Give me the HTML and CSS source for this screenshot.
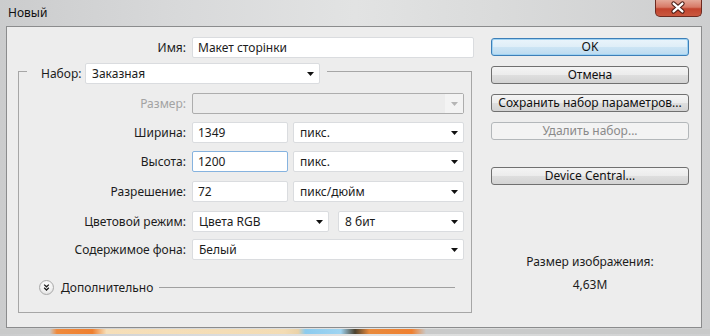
FILE: index.html
```html
<!DOCTYPE html>
<html lang="ru">
<head>
<meta charset="utf-8">
<title>Новый</title>
<link rel="stylesheet" href="styles.css">
</head>
<body>
<div class="win">
  <div class="titlebar">
    <span class="title">Новый</span>
    <div class="close">
      <svg width="47" height="17" viewBox="0 0 47 17">
        <path d="M19 3.5 L28 11.5 M28 3.5 L19 11.5" stroke="#4a1c14" stroke-width="4.6" stroke-linecap="round"/>
        <path d="M19 3.5 L28 11.5 M28 3.5 L19 11.5" stroke="#ffffff" stroke-width="2.4" stroke-linecap="round"/>
      </svg>
    </div>
  </div>
  <div class="client">
    <div class="left">
      <div class="row name-row">
        <span class="lbl">Имя:</span>
        <div class="field input w-name">Макет сторінки</div>
      </div>
      <div class="group">
        <div class="ghead">
          <div class="gcorner"></div>
          <span class="glabel">Набор:</span>
          <div class="field select w-preset">Заказная<span class="arr"><svg width="7" height="4" viewBox="0 0 7 4"><path d="M0 0H7L3.5 4Z"/></svg></span></div>
          <div class="gline"></div>
        </div>
        <div class="gbody">
          <div class="row r1">
            <span class="lbl dis">Размер:</span>
            <div class="field select disabled w-full"><span class="arr"><svg width="7" height="4" viewBox="0 0 7 4"><path d="M0 0H7L3.5 4Z"/></svg></span></div>
          </div>
          <div class="row r2">
            <span class="lbl">Ширина:</span>
            <div class="field input w-num">1349</div>
            <div class="field select w-unit">пикс.<span class="arr"><svg width="7" height="4" viewBox="0 0 7 4"><path d="M0 0H7L3.5 4Z"/></svg></span></div>
          </div>
          <div class="row r3">
            <span class="lbl">Высота:</span>
            <div class="field input focus w-num">1200</div>
            <div class="field select w-unit">пикс.<span class="arr"><svg width="7" height="4" viewBox="0 0 7 4"><path d="M0 0H7L3.5 4Z"/></svg></span></div>
          </div>
          <div class="row r4">
            <span class="lbl">Разрешение:</span>
            <div class="field input w-num">72</div>
            <div class="field select w-unit">пикс/дюйм<span class="arr"><svg width="7" height="4" viewBox="0 0 7 4"><path d="M0 0H7L3.5 4Z"/></svg></span></div>
          </div>
          <div class="row r5">
            <span class="lbl">Цветовой режим:</span>
            <div class="field select w-mode">Цвета RGB<span class="arr"><svg width="7" height="4" viewBox="0 0 7 4"><path d="M0 0H7L3.5 4Z"/></svg></span></div>
            <div class="field select w-bits">8 бит<span class="arr"><svg width="7" height="4" viewBox="0 0 7 4"><path d="M0 0H7L3.5 4Z"/></svg></span></div>
          </div>
          <div class="row r6">
            <span class="lbl">Содержимое фона:</span>
            <div class="field select w-full">Белый<span class="arr"><svg width="7" height="4" viewBox="0 0 7 4"><path d="M0 0H7L3.5 4Z"/></svg></span></div>
          </div>
          <div class="more">
            <span class="more-ico">
              <svg width="15" height="15" viewBox="0 0 15 15">
                <path d="M4.8 4.2 L7.5 6.7 L10.2 4.2 M4.8 7.9 L7.5 10.4 L10.2 7.9" fill="none" stroke="#1a1a1a" stroke-width="1.5"/>
              </svg>
            </span>
            <span class="more-text">Дополнительно</span>
            <span class="more-line"></span>
          </div>
        </div>
      </div>
    </div>
    <div class="right">
      <div class="btn default">OK</div>
      <div class="btn">Отмена</div>
      <div class="btn">Сохранить набор параметров...</div>
      <div class="btn disabled">Удалить набор...</div>
      <div class="btn device">Device Central...</div>
      <div class="size-label">Размер изображения:</div>
      <div class="size-value">4,63M</div>
    </div>
  </div>
  <div class="bottomframe"><div class="taskstrip"></div></div>
</div>
</body>
</html>
```

FILE: styles.css
```css
* { box-sizing: border-box; }
html, body { margin: 0; padding: 0; }
body {
  width: 710px;
  height: 336px;
  overflow: hidden;
  font-family: "Noto Sans", "DejaVu Sans", sans-serif;
  font-size: 12px;
  color: #1c1c1c;
  background: #cfd0d1;
}
.win {
  width: 710px;
  height: 336px;
  display: flex;
  flex-direction: column;
  background: linear-gradient(to right, #cbcccd 0%, #d8d9da 25%, #e2e3e3 50%, #dadbdb 70%, #cdcecf 100%);
}
.titlebar {
  height: 26px;
  display: flex;
  justify-content: space-between;
  align-items: flex-start;
  padding: 0 8px 0 8px;
}
.title {
  margin-top: 4px;
  line-height: 17px;
  color: #111;
}
.close {
  width: 47px;
  height: 17px;
  border: 1px solid #6d2a20;
  border-top: none;
  border-radius: 0 0 5px 5px;
  background: linear-gradient(#e4a898 0%, #d77966 45%, #c2432d 55%, #c9583f 100%);
  display: flex;
  margin-left: auto;
}
.close svg { display: block; margin-left: -1px; }
.client {
  margin: 0 8px 0 6px;
  height: 302px;
  border: 1px solid #8b8c8d;
  background: #ededed;
  display: flex;
}
.left {
  margin-left: 11px;
  width: 456px;
  padding-top: 10px;
}
.row {
  display: flex;
  align-items: center;
  height: 21px;
}
.lbl {
  width: 167px;
  text-align: right;
  margin-right: 6px;
  white-space: nowrap;
}
.name-row .lbl { width: 168px; }
.lbl.dis { color: #a3a3a3; }
.field {
  height: 21px;
  line-height: 19px;
  padding-left: 5px;
  background: #fff;
  border: 1px solid #dadcdf;
  border-radius: 2px;
  white-space: nowrap;
  display: flex;
  align-items: center;
}
.select { padding-left: 6px; }
.field.focus { border-color: #86b3df; }
.field.disabled {
  background: #ececec;
  border-color: #adadad;
  justify-content: flex-end;
}
.field.disabled .arr {
  background: #f3f3f3;
  height: 19px;
  width: 18px;
  margin-right: 0;
  display: flex;
  align-items: center;
  justify-content: center;
}
.field.disabled .arr svg path { fill: #b5b5b5; }
.arr {
  margin-left: auto;
  margin-right: 5px;
  display: flex;
  align-items: center;
}
.arr svg { display: block; }
.arr svg path { fill: #111; }
.w-name { width: 282px; }
.w-preset { width: 235px; }
.w-full { width: 272px; }
.w-num { width: 96px; margin-right: 5px; }
.w-unit { width: 171px; }
.w-mode { width: 137px; margin-right: 9px; }
.w-bits { width: 126px; }

.group {
  margin-top: 5px;
  width: 454px;
}
.ghead {
  display: flex;
  height: 21px;
}
.gcorner {
  width: 9px;
  height: 13px;
  margin-top: 8px;
  border-top: 1px solid #a6a6a6;
  border-left: 1px solid #a6a6a6;
}
.glabel {
  width: 58px;
  padding-left: 14px;
  line-height: 21px;
  white-space: nowrap;
}
.gline {
  flex: 1;
  margin-left: 7px;
  margin-top: 8px;
  height: 13px;
  border-top: 1px solid #a6a6a6;
  border-right: 1px solid #a6a6a6;
}
.gbody {
  height: 229px;
  border: 1px solid #a6a6a6;
  border-top: none;
  padding-top: 9px;
}
.r2 { margin-top: 8px; }
.r3 { margin-top: 8px; }
.r4 { margin-top: 9px; }
.r5 { margin-top: 9px; }
.r6 { margin-top: 7px; }
.more {
  display: flex;
  align-items: center;
  height: 15px;
  margin-top: 20px;
  padding-left: 20px;
  padding-right: 16px;
}
.more-ico {
  width: 15px;
  height: 15px;
  border-radius: 50%;
  border: 1px solid #a9a9a9;
  background: radial-gradient(circle at 50% 35%, #ffffff 0%, #f3f3f3 50%, #d6d6d6 100%);
  display: flex;
  align-items: center;
  justify-content: center;
}
.more-ico svg { display: block; }
.more-text { margin-left: 7px; white-space: nowrap; }
.more-line {
  flex: 1;
  margin-left: 6px;
  border-top: 1px solid #a0a0a0;
  margin-top: -1px;
}

.right {
  margin-left: 17px;
  width: 198px;
  padding-top: 11px;
  display: flex;
  flex-direction: column;
}
.btn {
  height: 18px;
  line-height: 16px;
  text-align: center;
  border: 1px solid #707070;
  border-radius: 3px;
  background: linear-gradient(#f4f4f4 0%, #ececec 48%, #dedede 52%, #d3d3d3 100%);
  color: #111;
  margin-bottom: 10px;
  white-space: nowrap;
}
.btn.default {
  border-color: #3d7fb8;
  background: linear-gradient(#eaf4fb 0%, #dfeef8 48%, #cce4f4 52%, #bcdbf0 100%);
  box-shadow: inset 0 0 0 1px #9fd2f2;
}
.btn.disabled {
  border-color: #b3b7ba;
  background: #f3f3f3;
  color: #8a8a8a;
}
.btn.device { margin-top: 17px; }
.size-label {
  margin-top: 59px;
  line-height: 16px;
  text-align: center;
}
.size-value {
  margin-top: 7px;
  line-height: 16px;
  text-align: center;
}
.bottomframe {
  flex: 1;
  padding: 1px 0 0 0;
}
.taskstrip {
  height: 5px;
  background: linear-gradient(to right,
    #c9caca 0%, #c9caca 7%,
    #ef8a3c 8%, #ee7f2f 13%,
    #f6dfb9 15%, #f3dcb4 40%, #ead2a8 42%,
    #8ccbee 43%, #9fd4f1 48%,
    #4a4230 50%, #e88a3c 52%, #ef8030 58%,
    #c9caca 60%, #c9caca 100%);
}
```
